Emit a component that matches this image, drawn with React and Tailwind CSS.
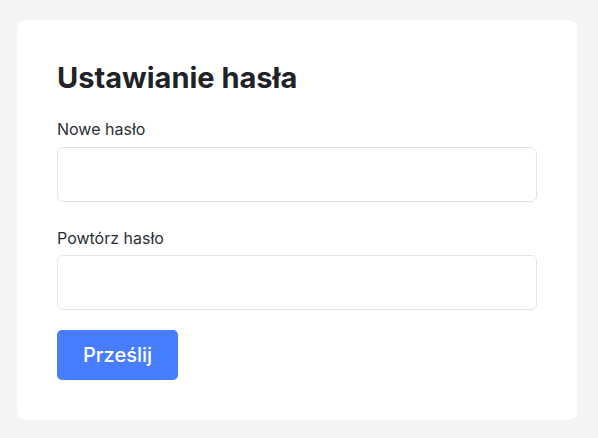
export default function App() {
  return (
    <div className="min-h-[438px] w-full bg-[#f3f4f6] px-[17px] pt-[20px] pb-[18px]" style={{ fontFamily: 'Inter, "Noto Sans", sans-serif' }}>
      <div className="w-[560px] rounded-[8px] bg-white p-[40px]">
        <h1 className="text-[29px] leading-[36px] font-bold text-[#1f2328]">Ustawianie hasła</h1>
        <div className="mt-[21px]">
          <label className="block text-[16px] leading-[24px] text-[#2b2f33]">Nowe hasło</label>
          <input type="password" className="mt-[6px] block h-[55px] w-full rounded-[6px] border border-[#e2e4e8] bg-white px-3 outline-none" />
        </div>
        <div className="mt-[24px]">
          <label className="block text-[16px] leading-[24px] text-[#2b2f33]">Powtórz hasło</label>
          <input type="password" className="mt-[5px] block h-[55px] w-full rounded-[6px] border border-[#e2e4e8] bg-white px-3 outline-none" />
        </div>
        <button className="mt-[20px] flex h-[50px] w-[121px] items-center justify-center rounded-[5px] bg-[#477eff] text-[20px] font-medium text-white">
          Prześlij
        </button>
      </div>
    </div>
  );
}
